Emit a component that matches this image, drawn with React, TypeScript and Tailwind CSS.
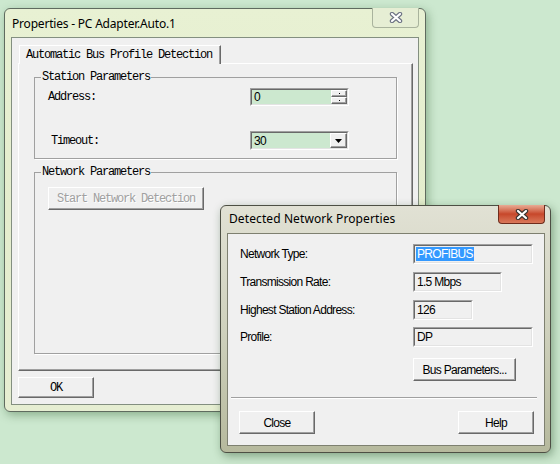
import React from 'react'

const mono = "font-['Liberation_Mono',monospace] text-[12px] tracking-[-1.2px] text-black"
const sans = "font-['Liberation_Sans',Arial,sans-serif] text-[12px] tracking-[-0.7px] text-black"
const title = "font-['Noto_Sans',sans-serif] text-[12px] text-black"

const raised =
  'border border-t-white border-l-white border-r-[#696969] border-b-[#696969] shadow-[inset_-1px_-1px_0_#a0a0a0] bg-[#f0f0f0]'

function CloseGlyph({outline}: {outline: string}) {
  return (
    <svg width="14" height="11" viewBox="0 0 14 11">
      <path d="M3 2 L11 9 M11 2 L3 9" stroke={outline} strokeWidth="4.4" strokeLinecap="round" />
      <path d="M3 2 L11 9 M11 2 L3 9" stroke="#fff" strokeWidth="2.2" strokeLinecap="round" />
    </svg>
  )
}

function Sunken({
  className,
  inner,
  children,
}: {
  className: string
  inner: string
  children?: React.ReactNode
}) {
  return (
    <div
      className={`border border-t-[#a0a0a0] border-l-[#a0a0a0] border-r-white border-b-white ${className}`}
    >
      <div
        className={`flex h-full w-full items-center border border-t-[#696969] border-l-[#696969] border-r-[#e3e3e3] border-b-[#e3e3e3] ${inner}`}
      >
        {children}
      </div>
    </div>
  )
}

function Group({
  label,
  className,
  children,
}: {
  label: string
  className: string
  children: React.ReactNode
}) {
  return (
    <fieldset
      className={`ml-[15px] w-[363px] border border-[#a0a0a0] shadow-[1px_1px_0_#fff] ${className}`}
    >
      <legend className={`ml-[6px] px-[1px] leading-[12px] ${mono}`}>{label}</legend>
      {children}
    </fieldset>
  )
}

function Field({label, width, children}: {label: string; width: string; children?: React.ReactNode}) {
  return (
    <div className="flex h-[20px] items-center pl-[12px]">
      <span className={`w-[173px] ${sans}`}>{label}</span>
      <Sunken className={`h-[20px] ${width}`} inner="bg-[#f0f0f0] pl-[1px]">
        {children}
      </Sunken>
    </div>
  )
}

export default function App() {
  return (
    <div className="relative h-[464px] w-[560px] overflow-hidden bg-[#cce8cf]">
      {/* Properties window */}
      <div className="absolute left-[4px] top-[8px] flex h-[404px] w-[422px] flex-col rounded-[6px] border border-[#5f6b5f] bg-gradient-to-b from-[#e8f1d3] via-[#e4edcd] to-[#e6eed2] px-[6px] pb-[6px] shadow-[2px_3px_10px_rgba(20,70,20,0.35)]">
        <div className="flex h-[28px] justify-between">
          <div className={`pl-[1px] pt-[6px] tracking-[-0.2px] ${title}`}>Properties - PC Adapter.Auto.1</div>
          <div className="-mt-[1px] flex h-[20px] w-[47px] items-center justify-center rounded-b-[4px] border border-t-0 border-[#a9b39d] bg-[#e6eed4]">
            <CloseGlyph outline="#6c7283" />
          </div>
        </div>
        <div className="flex h-[368px] flex-col border border-[#838f80] bg-[#f0f0f0]">
          <div className="pl-[7px] pt-[7px]">
            <div
              className={`relative z-10 -mb-[1px] flex h-[19px] w-[202px] items-center border border-b-0 border-t-white border-l-white border-r-[#696969] bg-[#f0f0f0] pl-[6px] shadow-[inset_-1px_0_0_#a0a0a0] ${mono}`}
            >
              Automatic Bus Profile Detection
            </div>
          </div>
          <div className="ml-[6px] h-[308px] w-[395px] border border-t-white border-l-white border-r-[#696969] border-b-[#696969] shadow-[inset_-1px_-1px_0_#a0a0a0]">
            <Group label="Station Parameters" className="mt-[7px] pb-[8px]">
              <div className="mt-[5px] flex h-[18px] items-center pl-[13px]">
                <span className={`w-[202px] ${mono}`}>Address:</span>
                <Sunken className="h-[18px] w-[99px]" inner="bg-[#cce8cf] pl-[2px]">
                  <span className={`flex-1 ${sans}`}>0</span>
                  <div className="flex h-full w-[16px] flex-col">
                    <div className={`flex flex-1 items-center justify-center ${raised}`}>
                      <div className="h-[1px] w-[1px] bg-black" />
                    </div>
                    <div className={`flex flex-1 items-center justify-center ${raised}`}>
                      <div className="h-[1px] w-[1px] bg-black" />
                    </div>
                  </div>
                </Sunken>
              </div>
              <div className="mt-[25px] flex h-[19px] items-center pl-[16px]">
                <span className={`w-[199px] ${mono}`}>Timeout:</span>
                <Sunken className="h-[19px] w-[99px]" inner="bg-[#cce8cf] pl-[2px]">
                  <span className={`flex-1 ${sans}`}>30</span>
                  <div className={`flex h-full w-[17px] items-center justify-center ${raised}`}>
                    <svg width="7" height="4" viewBox="0 0 7 4">
                      <path d="M0 0 H7 L3.5 4 Z" fill="#000" />
                    </svg>
                  </div>
                </Sunken>
              </div>
            </Group>
            <Group label="Network Parameters" className="mt-[7px] h-[188px]">
              <div
                className={`ml-[13px] mt-[9px] flex h-[23px] w-[156px] items-center justify-center ${raised} ${mono} !text-[#a0a0a0] [text-shadow:1px_1px_0_#fff]`}
              >
                Start Network Detection
              </div>
            </Group>
          </div>
          <div
            className={`ml-[6px] mt-[6px] flex h-[21px] w-[76px] items-center justify-center ${raised} ${mono}`}
          >
            OK
          </div>
        </div>
      </div>

      {/* Detected Network Properties window */}
      <div className="absolute left-[220px] top-[205px] flex h-[248px] w-[331px] flex-col rounded-[6px] border border-[#4d4f44] bg-gradient-to-b from-[#e1e1d4] via-[#cfd1bd] to-[#b6b99d] pb-[6px] pl-[6px] pr-[5px] shadow-[2px_3px_10px_rgba(20,60,20,0.4)]">
        <div className="flex h-[27px] justify-between">
          <div className={`pl-[2px] pt-[4px] tracking-[0.1px] ${title}`}>Detected Network Properties</div>
          <div className="-mt-[1px] flex h-[19px] w-[47px] items-center justify-center rounded-b-[4px] border border-t-0 border-[#6e2c1c] bg-gradient-to-b from-[#e7ab95] via-[#c7472a] to-[#d9785a]">
            <CloseGlyph outline="#3b3430" />
          </div>
        </div>
        <div className="flex h-[213px] flex-col border border-[#7e8070] bg-[#f0f0f0]">
          <div className="mt-[10px]">
            <Field label="Network Type:" width="w-[120px]">
              <span className={`bg-[#3399ff] px-[1px] leading-[14px] ${sans} !text-white`}>PROFIBUS</span>
            </Field>
          </div>
          <div className="mt-[8px]">
            <Field label="Transmission Rate:" width="w-[89px]">
              <span className={`px-[1px] ${sans}`}>1.5 Mbps</span>
            </Field>
          </div>
          <div className="mt-[8px]">
            <Field label="Highest Station Address:" width="w-[60px]">
              <span className={`px-[1px] ${sans}`}>126</span>
            </Field>
          </div>
          <div className="mt-[7px]">
            <Field label="Profile:" width="w-[120px]">
              <span className={`px-[1px] ${sans}`}>DP</span>
            </Field>
          </div>
          <div
            className={`ml-[185px] mt-[11px] flex h-[23px] w-[103px] items-center justify-center ${raised} ${sans}`}
          >
            Bus Parameters...
          </div>
          <div className="ml-[3px] mt-[16px] h-[2px] w-[306px] border-t border-t-[#a0a0a0] border-b border-b-white" />
          <div className="mt-[12px] flex justify-between pl-[11px] pr-[10px]">
            <div className={`flex h-[23px] w-[76px] items-center justify-center ${raised} ${sans}`}>
              Close
            </div>
            <div className={`flex h-[23px] w-[76px] items-center justify-center ${raised} ${sans}`}>
              Help
            </div>
          </div>
        </div>
      </div>
    </div>
  )
}
